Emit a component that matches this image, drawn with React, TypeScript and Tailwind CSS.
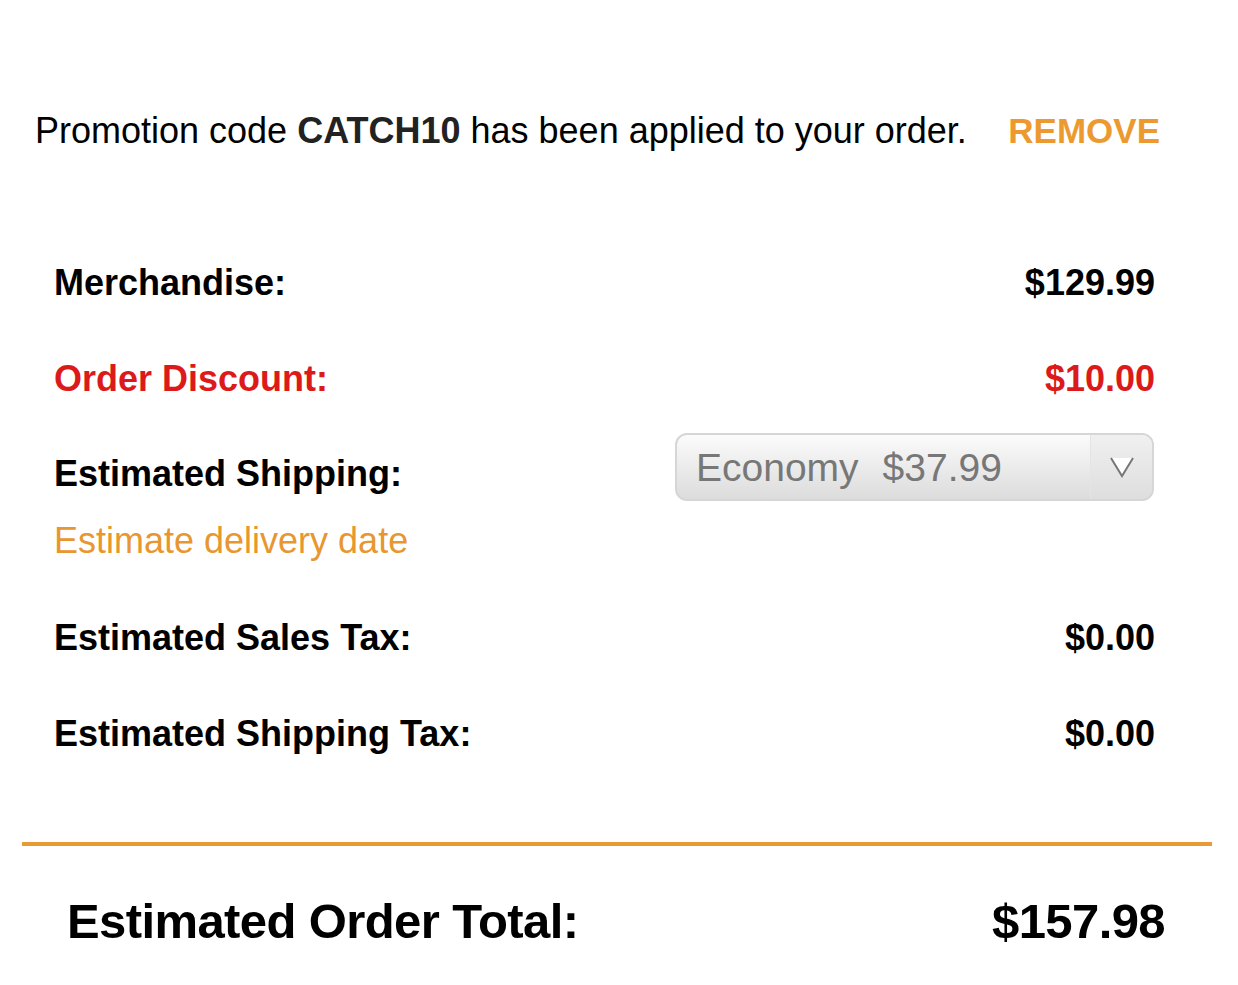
import React from "react";

const font = { fontFamily: '"Liberation Sans", Arial, Helvetica, sans-serif' };

function Row({ label, value, red }: { label: string; value: string; red?: boolean }) {
  return (
    <div className={`flex items-center justify-between h-[96px] text-[36px] font-bold ${red ? "text-[#dd1a1a]" : "text-black"}`}>
      <span>{label}</span>
      <span className="mr-[-1px]">{value}</span>
    </div>
  );
}

export default function App() {
  return (
    <div className="w-[1238px] h-[985px] bg-white overflow-hidden" style={font}>
      <div className="pt-[103px] pl-[35px] pr-[78px] flex items-center justify-between h-[158px]">
        <p className="text-[36px] text-black leading-none">
          Promotion code <span className="font-bold text-[#222]">CATCH10</span> has been applied to your order.
        </p>
        <span className="text-[35px] font-bold text-[#ec9a30] leading-none">REMOVE</span>
      </div>

      <div className="pl-[54px] pr-[84px] pt-[77px]">
        <Row label="Merchandise:" value="$129.99" />
        <Row label="Order Discount:" value="$10.00" red />
        <div className="flex justify-between items-start pt-[6px]">
          <div className="flex flex-col">
            <span className="text-[36px] font-bold text-black leading-none mt-[23px]">Estimated Shipping:</span>
            <span className="text-[36px] text-[#e8962f] leading-none mt-[31px]">Estimate delivery date</span>
          </div>
          <div className="w-[479px] h-[68px] rounded-[12px] border-2 border-[#d6d6d6] bg-gradient-to-b from-[#fbfbfb] to-[#dcdcdc] flex overflow-hidden">
            <div className="flex-1 flex items-center pl-[19px] text-[39px] text-[#777] leading-none">
              <span>Economy</span>
              <span className="ml-[24px]">$37.99</span>
            </div>
            <div className="w-[62px] border-l border-[#e4e4e4] bg-gradient-to-b from-[#f0f0f0] to-[#dedede] flex items-center justify-center">
              <svg width="28" height="24" viewBox="0 0 28 24">
                <path d="M3 3 L14 21 L25 3" fill="#fff" stroke="#777" strokeWidth="2" strokeLinejoin="miter" />
              </svg>
            </div>
          </div>
        </div>
        <div className="mt-[31px]">
          <Row label="Estimated Sales Tax:" value="$0.00" />
          <Row label="Estimated Shipping Tax:" value="$0.00" />
        </div>
      </div>

      <div className="ml-[22px] mr-[26px] mt-[60px] h-[4px] bg-[#e89a35]" />

      <div className="flex items-center justify-between pl-[67px] pr-[73px] h-[150px]">
        <span className="text-[49px] font-bold text-black tracking-[-0.6px] leading-none">Estimated Order Total:</span>
        <span className="text-[49px] font-bold text-black tracking-[-0.6px] leading-none">$157.98</span>
      </div>
    </div>
  );
}
